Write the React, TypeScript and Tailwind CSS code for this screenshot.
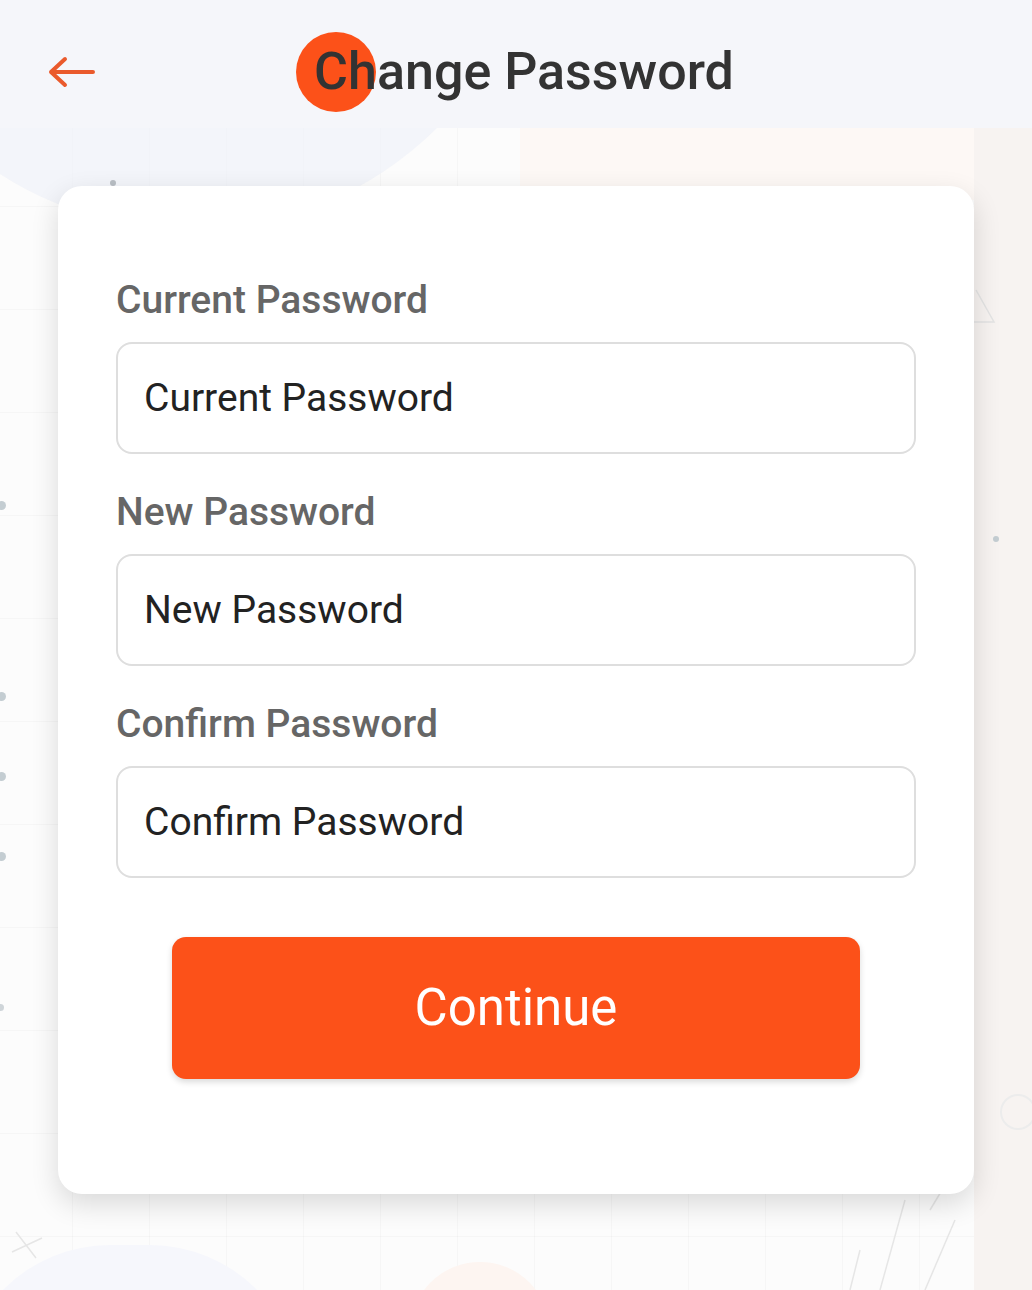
import React from 'react'

const fields = ['Current Password', 'New Password', 'Confirm Password']

const Background = () => (
  <div className="pointer-events-none absolute inset-0 overflow-hidden">
    {/* faint grid */}
    <div className="absolute inset-0 bg-[linear-gradient(to_right,rgba(0,0,0,0.025)_1px,transparent_1px),linear-gradient(to_bottom,rgba(0,0,0,0.025)_1px,transparent_1px)] bg-[size:77px_103px] bg-[position:-5px_0px]" />
    {/* blobs */}
    <div className="absolute -left-[160px] -top-[560px] h-[790px] w-[700px] rounded-full bg-[#f0f2f9] opacity-80" />
    <div className="absolute left-[520px] top-0 h-[200px] w-[560px] bg-[#fdf8f5]" />
    <div className="absolute right-0 top-0 h-full w-[58px] bg-[#f7f3f1]" />
    <div className="absolute -left-[40px] top-[1245px] h-[300px] w-[340px] rounded-full bg-[#f6f7fc]" />
    <div className="absolute left-[410px] top-[1262px] h-[200px] w-[140px] rounded-full bg-[#fdf5f1]" />
    {/* dots */}
    <div className="absolute -left-[3px] top-[501px] h-[9px] w-[9px] rounded-full bg-[#c4cdd2]" />
    <div className="absolute -left-[3px] top-[692px] h-[9px] w-[9px] rounded-full bg-[#c4cdd2]" />
    <div className="absolute -left-[3px] top-[772px] h-[9px] w-[9px] rounded-full bg-[#c4cdd2]" />
    <div className="absolute -left-[3px] top-[852px] h-[9px] w-[9px] rounded-full bg-[#c4cdd2]" />
    <div className="absolute -left-[3px] top-[1004px] h-[7px] w-[7px] rounded-full bg-[#cfd5d9]" />
    <div className="absolute left-[993px] top-[536px] h-[6px] w-[6px] rounded-full bg-[#c4cdd2]" />
    <div className="absolute left-[110px] top-[180px] h-[6px] w-[6px] rounded-full bg-[#b8bec4]" />
    {/* outlines */}
    <svg className="absolute left-[972px] top-[286px]" width="26" height="40" viewBox="0 0 26 40">
      <path d="M4 4 L22 36 L2 36" fill="none" stroke="#e4e4e4" strokeWidth="1.5" />
    </svg>
    <div className="absolute left-[1000px] top-[1094px] h-[36px] w-[36px] rounded-full border-2 border-[#ececec]" />
    <svg className="absolute left-[830px] top-[1190px]" width="130" height="100" viewBox="0 0 130 100">
      <path d="M50 100 L75 10 M95 100 L125 30 M100 20 L112 0 M20 100 L30 60" stroke="#e6e6e6" strokeWidth="1.5" fill="none" />
    </svg>
    <svg className="absolute left-[10px] top-[1228px]" width="34" height="34" viewBox="0 0 34 34">
      <path d="M6 4 L26 30 M2 24 L32 10" stroke="#e6e6e6" strokeWidth="1.5" fill="none" />
    </svg>
  </div>
)

export default function App() {
  return (
    <div className="relative min-h-[1290px] w-full overflow-hidden bg-[#fcfcfc] font-['Roboto',sans-serif]">
      <Background />

      <header className="relative z-10 flex h-[128px] items-center bg-[#f5f6fa] px-[46px] pt-[16px]">
        <button className="flex w-[50px] shrink-0">
          <svg width="50" height="32" viewBox="0 0 50 32" fill="none">
            <path d="M47 16 H5 M19 3 L5 16 L19 29" stroke="#ea5a2c" strokeWidth="4" strokeLinecap="round" strokeLinejoin="round" />
          </svg>
        </button>
        <div className="flex flex-1 justify-center pl-4">
          <h1 className="relative text-[52px] font-medium leading-none text-[#333333]">
            <span className="absolute -left-[18px] top-1/2 h-[80px] w-[80px] -translate-y-1/2 rounded-full bg-[#fc5119]" />
            <span className="relative">Change Password</span>
          </h1>
        </div>
        <div className="w-[50px] shrink-0" />
      </header>

      <main className="relative z-10 px-[58px] pt-[58px] pb-[96px]">
        <div className="rounded-[24px] bg-white px-[58px] pt-[90px] pb-[115px] shadow-[0_10px_28px_rgba(0,0,0,0.14)]">
          <div className="flex flex-col gap-[34px]">
            {fields.map((f) => (
              <div key={f} className="flex flex-col gap-[18px]">
                <label className="text-[39px] font-medium leading-[48px] text-[#666666]">{f}</label>
                <input
                  type="password"
                  placeholder={f}
                  className="h-[112px] w-full rounded-[16px] border-2 border-[#dedede] bg-white px-[26px] text-[39px] text-[#222222] outline-none placeholder:text-[#222222]"
                />
              </div>
            ))}
          </div>
          <div className="mt-[59px] flex justify-center">
            <button className="h-[142px] w-[688px] rounded-[14px] bg-[#fc5119] text-[51px] text-white shadow-[0_3px_6px_rgba(0,0,0,0.15)]">
              Continue
            </button>
          </div>
        </div>
      </main>
    </div>
  )
}
